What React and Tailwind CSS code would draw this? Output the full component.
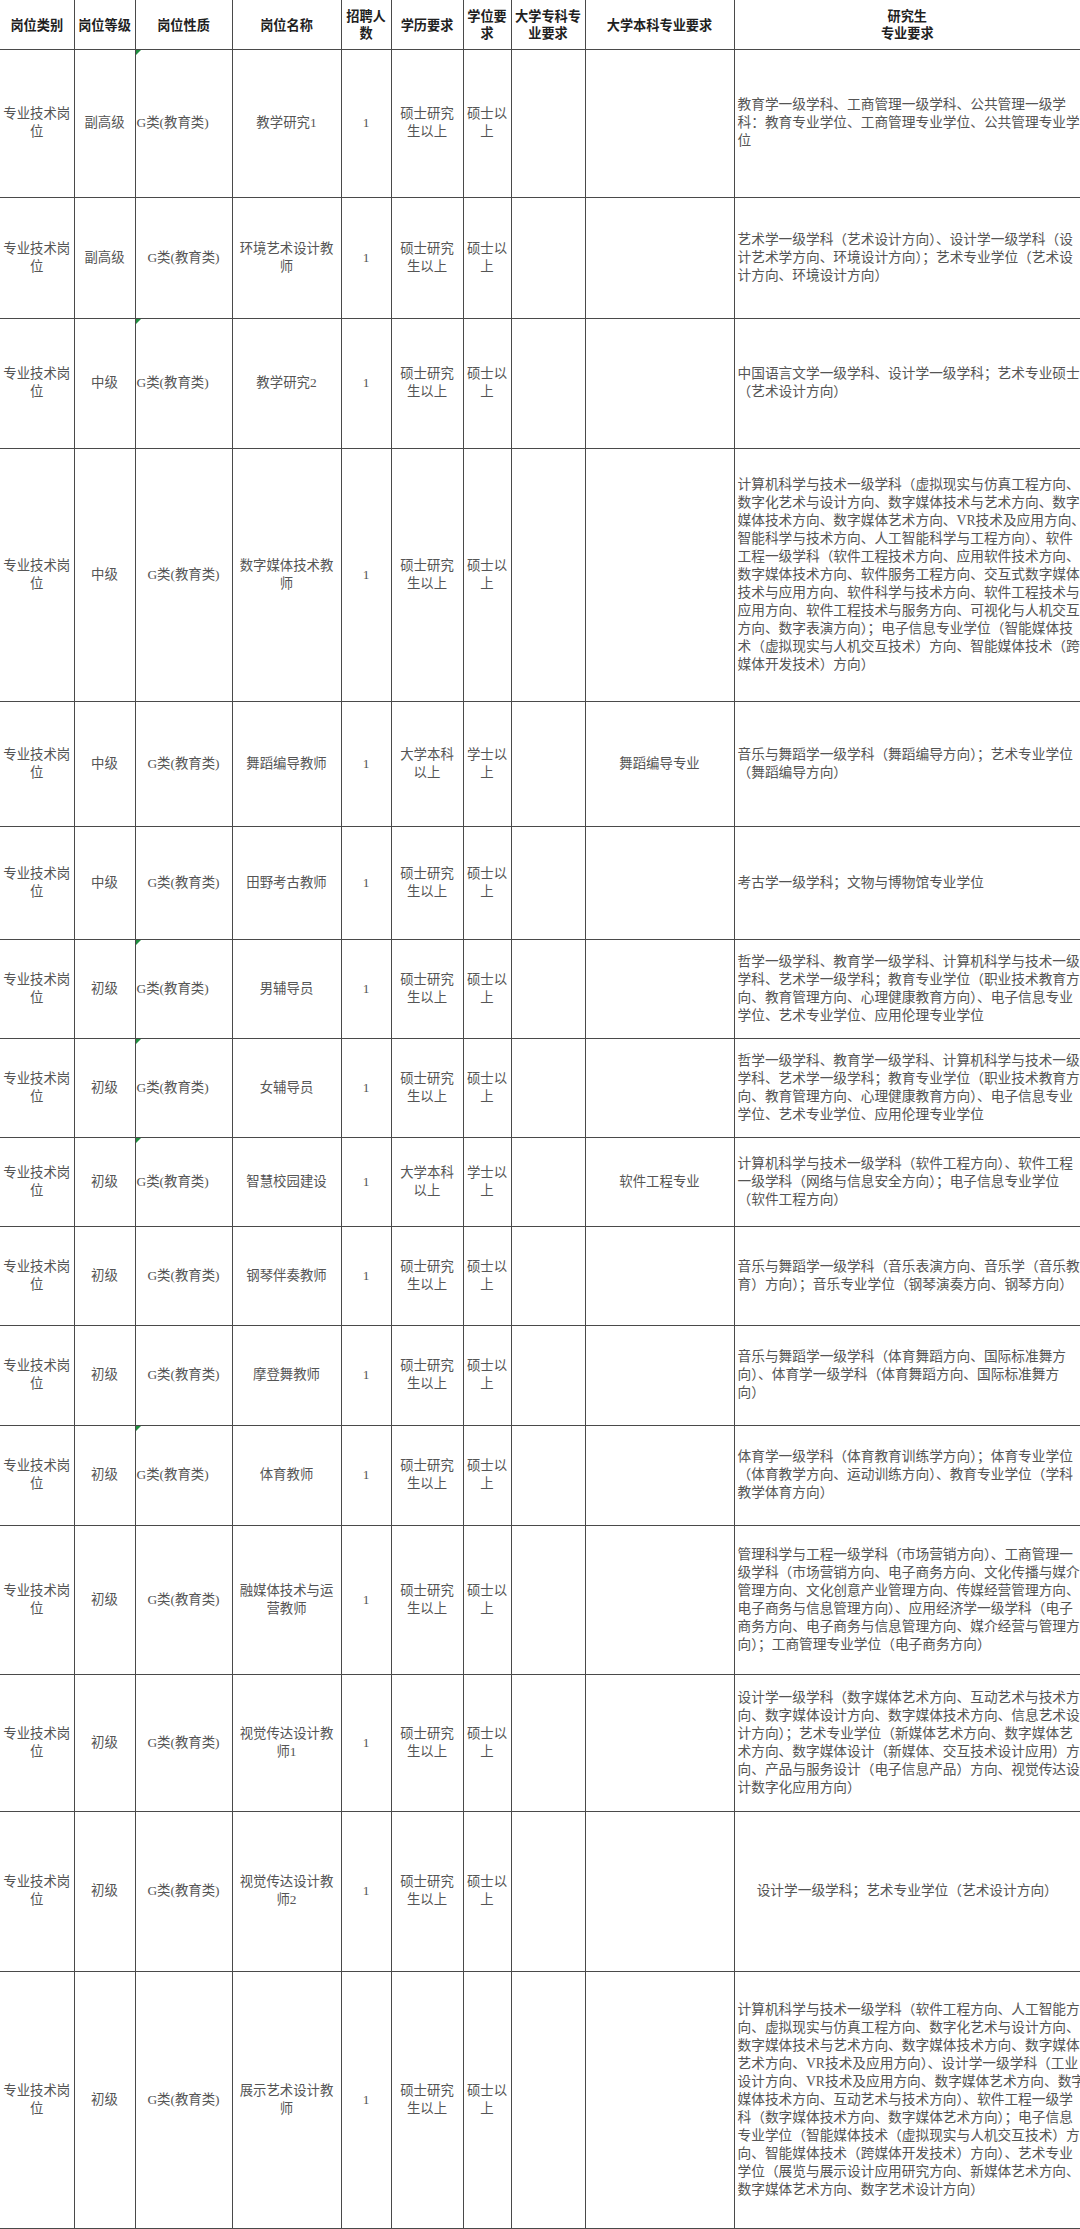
import React from 'react';

const G = 'G类(教育类)';
const MASTER = '硕士研究\n生以上';
const MASTER_DEG = '硕士以\n上';
const BACHELOR = '大学本科\n以上';
const BACHELOR_DEG = '学士以\n上';

const COUNSELOR = [
  '哲学一级学科、教育学一级学科、计算机科学与技术一级',
  '学科、艺术学一级学科；教育专业学位（职业技术教育方',
  '向、教育管理方向、心理健康教育方向）、电子信息专业',
  '学位、艺术专业学位、应用伦理专业学位',
];

// one entry per job row, top to bottom
const rows = [
  {
    h: 'h-[148px]', grade: '副高级', flag: true, name: '教学研究1', edu: MASTER, deg: MASTER_DEG,
    major: [
      '教育学一级学科、工商管理一级学科、公共管理一级学',
      '科：教育专业学位、工商管理专业学位、公共管理专业学',
      '位',
    ],
  },
  {
    h: 'h-[121px]', grade: '副高级', name: '环境艺术设计教\n师', edu: MASTER, deg: MASTER_DEG,
    major: [
      '艺术学一级学科（艺术设计方向）、设计学一级学科（设',
      '计艺术学方向、环境设计方向）；艺术专业学位（艺术设',
      '计方向、环境设计方向）',
    ],
  },
  {
    h: 'h-[130px]', grade: '中级', flag: true, name: '教学研究2', edu: MASTER, deg: MASTER_DEG,
    major: [
      '中国语言文学一级学科、设计学一级学科；艺术专业硕士',
      '（艺术设计方向）',
    ],
  },
  {
    h: 'h-[253px]', grade: '中级', name: '数字媒体技术教\n师', edu: MASTER, deg: MASTER_DEG,
    major: [
      '计算机科学与技术一级学科（虚拟现实与仿真工程方向、',
      '数字化艺术与设计方向、数字媒体技术与艺术方向、数字',
      '媒体技术方向、数字媒体艺术方向、VR技术及应用方向、',
      '智能科学与技术方向、人工智能科学与工程方向）、软件',
      '工程一级学科（软件工程技术方向、应用软件技术方向、',
      '数字媒体技术方向、软件服务工程方向、交互式数字媒体',
      '技术与应用方向、软件科学与技术方向、软件工程技术与',
      '应用方向、软件工程技术与服务方向、可视化与人机交互',
      '方向、数字表演方向）；电子信息专业学位（智能媒体技',
      '术（虚拟现实与人机交互技术）方向、智能媒体技术（跨',
      '媒体开发技术）方向）',
    ],
  },
  {
    h: 'h-[125px]', grade: '中级', name: '舞蹈编导教师', edu: BACHELOR, deg: BACHELOR_DEG, ben: '舞蹈编导专业',
    major: [
      '音乐与舞蹈学一级学科（舞蹈编导方向）；艺术专业学位',
      '（舞蹈编导方向）',
    ],
  },
  {
    h: 'h-[113px]', grade: '中级', name: '田野考古教师', edu: MASTER, deg: MASTER_DEG,
    major: ['考古学一级学科；文物与博物馆专业学位'],
  },
  { h: 'h-[99px]', grade: '初级', flag: true, name: '男辅导员', edu: MASTER, deg: MASTER_DEG, major: COUNSELOR },
  { h: 'h-[99px]', grade: '初级', flag: true, name: '女辅导员', edu: MASTER, deg: MASTER_DEG, major: COUNSELOR },
  {
    h: 'h-[89px]', grade: '初级', flag: true, name: '智慧校园建设', edu: BACHELOR, deg: BACHELOR_DEG, ben: '软件工程专业',
    major: [
      '计算机科学与技术一级学科（软件工程方向）、软件工程',
      '一级学科（网络与信息安全方向）；电子信息专业学位',
      '（软件工程方向）',
    ],
  },
  {
    h: 'h-[99px]', grade: '初级', name: '钢琴伴奏教师', edu: MASTER, deg: MASTER_DEG,
    major: [
      '音乐与舞蹈学一级学科（音乐表演方向、音乐学（音乐教',
      '育）方向）；音乐专业学位（钢琴演奏方向、钢琴方向）',
    ],
  },
  {
    h: 'h-[100px]', grade: '初级', name: '摩登舞教师', edu: MASTER, deg: MASTER_DEG,
    major: [
      '音乐与舞蹈学一级学科（体育舞蹈方向、国际标准舞方',
      '向）、体育学一级学科（体育舞蹈方向、国际标准舞方',
      '向）',
    ],
  },
  {
    h: 'h-[100px]', grade: '初级', flag: true, name: '体育教师', edu: MASTER, deg: MASTER_DEG,
    major: [
      '体育学一级学科（体育教育训练学方向）；体育专业学位',
      '（体育教学方向、运动训练方向）、教育专业学位（学科',
      '教学体育方向）',
    ],
  },
  {
    h: 'h-[149px]', grade: '初级', name: '融媒体技术与运\n营教师', edu: MASTER, deg: MASTER_DEG,
    major: [
      '管理科学与工程一级学科（市场营销方向）、工商管理一',
      '级学科（市场营销方向、电子商务方向、文化传播与媒介',
      '管理方向、文化创意产业管理方向、传媒经营管理方向、',
      '电子商务与信息管理方向）、应用经济学一级学科（电子',
      '商务方向、电子商务与信息管理方向、媒介经营与管理方',
      '向）；工商管理专业学位（电子商务方向）',
    ],
  },
  {
    h: 'h-[137px]', grade: '初级', name: '视觉传达设计教\n师1', edu: MASTER, deg: MASTER_DEG,
    major: [
      '设计学一级学科（数字媒体艺术方向、互动艺术与技术方',
      '向、数字媒体设计方向、数字媒体技术方向、信息艺术设',
      '计方向）；艺术专业学位（新媒体艺术方向、数字媒体艺',
      '术方向、数字媒体设计（新媒体、交互技术设计应用）方',
      '向、产品与服务设计（电子信息产品）方向、视觉传达设',
      '计数字化应用方向）',
    ],
  },
  {
    h: 'h-[160px]', grade: '初级', name: '视觉传达设计教\n师2', edu: MASTER, deg: MASTER_DEG, center: true,
    major: ['设计学一级学科；艺术专业学位（艺术设计方向）'],
  },
  {
    h: 'h-[257px]', grade: '初级', name: '展示艺术设计教\n师', edu: MASTER, deg: MASTER_DEG,
    major: [
      '计算机科学与技术一级学科（软件工程方向、人工智能方',
      '向、虚拟现实与仿真工程方向、数字化艺术与设计方向、',
      '数字媒体技术与艺术方向、数字媒体技术方向、数字媒体',
      '艺术方向、VR技术及应用方向）、设计学一级学科（工业',
      '设计方向、VR技术及应用方向、数字媒体艺术方向、数字',
      '媒体技术方向、互动艺术与技术方向）、软件工程一级学',
      '科（数字媒体技术方向、数字媒体艺术方向）；电子信息',
      '专业学位（智能媒体技术（虚拟现实与人机交互技术）方',
      '向、智能媒体技术（跨媒体开发技术）方向）、艺术专业',
      '学位（展览与展示设计应用研究方向、新媒体艺术方向、',
      '数字媒体艺术方向、数字艺术设计方向）',
    ],
  },
];

const headers = [
  '岗位类别', '岗位等级', '岗位性质', '岗位名称', '招聘人\n数',
  '学历要求', '学位要\n求', '大学专科专\n业要求', '大学本科专业要求', '研究生\n专业要求',
];

const cell = 'border-r border-b border-[#4a4a4a] px-[2px] align-middle whitespace-pre-line text-center';

export default function App() {
  return (
    <div className="w-[1080px] h-[2229px] overflow-hidden bg-white">
      <table className="table-fixed border-collapse w-[1080px] text-[13.4px] leading-[18px] text-[#555555] font-['Liberation_Serif','Noto_Sans_CJK_SC',serif]">
        <colgroup>
          <col className="w-[74px]" />
          <col className="w-[61px]" />
          <col className="w-[97px]" />
          <col className="w-[109px]" />
          <col className="w-[50px]" />
          <col className="w-[72px]" />
          <col className="w-[48px]" />
          <col className="w-[74px]" />
          <col className="w-[149px]" />
          <col className="w-[346px]" />
        </colgroup>
        <thead>
          <tr className="h-[49px]">
            {headers.map((t, i) => (
              <th
                key={i}
                className={`${i === 9 ? 'border-b' : 'border-r border-b'} border-[#4a4a4a] px-[2px] align-middle whitespace-pre-line text-center font-bold text-[13.2px] leading-[17.5px] text-[#1f1f1f] font-['Noto_Sans_CJK_SC',sans-serif]`}
              >
                {t}
              </th>
            ))}
          </tr>
        </thead>
        <tbody>
          {rows.map((r, i) => (
            <tr key={i} className={r.h}>
              <td className={cell}>{'专业技术岗\n位'}</td>
              <td className={cell}>{r.grade}</td>
              <td className={`${cell} relative ${r.flag ? '!text-left !px-[1px]' : ''}`}>
                {r.flag && (
                  <span className="absolute left-0 top-0 w-0 h-0 border-t-[5px] border-r-[5px] border-t-[#1e8e3e] border-r-transparent" />
                )}
                {G}
              </td>
              <td className={cell}>{r.name}</td>
              <td className={cell}>1</td>
              <td className={cell}>{r.edu}</td>
              <td className={cell}>{r.deg}</td>
              <td className={cell}></td>
              <td className={cell}>{r.ben || ''}</td>
              <td
                className={`border-b border-[#4a4a4a] align-middle whitespace-pre text-[13.7px] ${r.center ? 'text-center' : 'text-left pl-[3px]'}`}
              >
                {r.major.join('\n')}
              </td>
            </tr>
          ))}
        </tbody>
      </table>
    </div>
  );
}
